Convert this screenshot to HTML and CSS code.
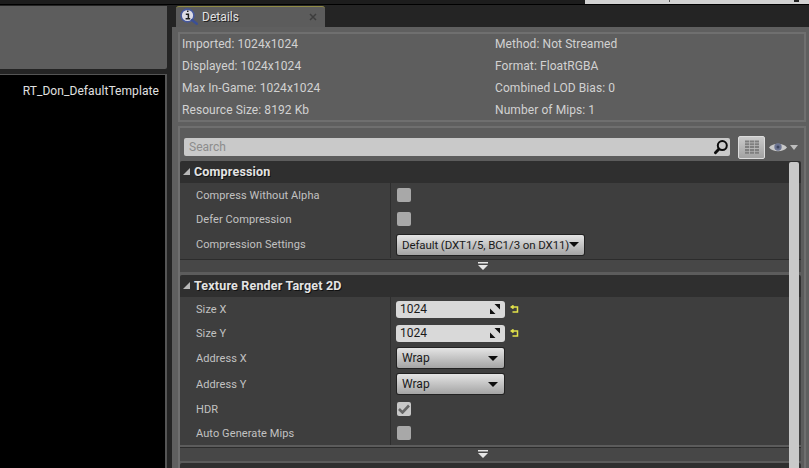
FILE: index.html
```html
<!DOCTYPE html>
<html lang="en">
<head>
<meta charset="utf-8">
<title>Details</title>
<link rel="stylesheet" href="styles.css">
</head>
<body>
<div class="topbar"><div class="topfield"></div></div>
<div class="main">
  <aside class="left">
    <div class="thumb"></div>
    <div class="assets"><div class="asset">RT_Don_DefaultTemplate</div></div>
  </aside>
  <section class="right">
    <div class="tabs">
      <div class="tab">
        <svg class="tabicon" width="18" height="18" viewBox="0 0 18 18"><circle cx="7.500" cy="7.500" r="6.400" fill="#dcdce6" stroke="#46589c" stroke-width="1.600"/><path d="M12 12l4.800 3.800" stroke="#3a4f96" stroke-width="2.400" stroke-linecap="round"/><path d="M5.800 6.200h2.600v4.200M5.600 10.800h4.600M7 3.200h1.500" stroke="#1c1c1c" stroke-width="1.500" fill="none"/></svg>
        <span class="tabtitle">Details</span>
        <svg class="tabclose" width="8" height="8" viewBox="0 0 8 8"><path d="M1 1l6 6M7 1l-6 6" stroke="#3d3d3d" stroke-width="1.500"/></svg>
      </div>
    </div>
    <div class="body">
      <div class="info">
        <div class="infocol">
          <div>Imported: 1024x1024</div>
          <div>Displayed: 1024x1024</div>
          <div>Max In-Game: 1024x1024</div>
          <div>Resource Size: 8192 Kb</div>
        </div>
        <div class="infocol">
          <div>Method: Not Streamed</div>
          <div>Format: FloatRGBA</div>
          <div>Combined LOD Bias: 0</div>
          <div>Number of Mips: 1</div>
        </div>
      </div>
      <div class="panel">
        <div class="searchrow">
          <div class="search">
            <span class="placeholder">Search</span>
            <svg class="lens" width="16" height="16" viewBox="0 0 16 16"><circle cx="9.300" cy="6.600" r="4.500" fill="none" stroke="#0c0c0c" stroke-width="2"/><path d="M6 10l-3.600 3.800" stroke="#0c0c0c" stroke-width="2.800" stroke-linecap="round"/></svg>
          </div>
          <div class="gridbtn">
            <svg width="14" height="14" viewBox="0 0 14 14"><path d="M0 1.500h14M0 4.300h14M0 7.100h14M0 9.900h14M0 12.700h14" stroke="#7f7f7f" stroke-width="2"/><path d="M4.500 0v14M9.500 0v14" stroke="#bdbdbd" stroke-width=".7"/></svg>
          </div>
          <svg class="eye" width="18" height="11" viewBox="0 0 18 11"><path d="M0 5.500C4 .5 14 .5 18 5.500 14 10.500 4 10.500 0 5.500z" fill="#c9c9c9"/><circle cx="9" cy="5" r="3.700" fill="#6b7390"/><circle cx="9" cy="5" r="1.500" fill="#3e4660"/></svg>
          <svg class="caret" width="8" height="5" viewBox="0 0 8 5"><path d="M0 0h8L4 5z" fill="#bdbdbd"/></svg>
        </div>
        <div class="listwrap">
          <div class="list">
            <div class="cat">
              <div class="cathead"><i class="tri"></i><span>Compression</span></div>
              <div class="row"><div class="name">Compress Without Alpha</div><div class="val"><span class="check"></span></div></div>
              <div class="row"><div class="name">Defer Compression</div><div class="val"><span class="check"></span></div></div>
              <div class="row tall last"><div class="name">Compression Settings</div><div class="val"><div class="combo wide"><span>Default (DXT1/5, BC1/3 on DX11)</span><i class="down"></i></div></div></div>
              <div class="more"><svg width="10" height="8" viewBox="0 0 10 8"><path d="M0 0h10v1.500H0zM0 3h10L5 8z" fill="#e6e6e6"/></svg></div>
            </div>
            <div class="cat">
              <div class="cathead"><i class="tri"></i><span>Texture Render Target 2D</span></div>
              <div class="row"><div class="name">Size X</div><div class="val"><div class="num"><span>1024</span><svg width="10" height="10" viewBox="0 0 10 10"><path d="M4.500 0H10v5.500zM0 4.500L5.500 10H0z" fill="#111"/></svg></div><svg class="reset" width="9" height="9" viewBox="0 0 9 9"><path d="M1.500 2h6v5H2.500M3.500 .4L1.200 2l2.300 1.700" fill="none" stroke="#e2e24a" stroke-width="1.500"/></svg></div></div>
              <div class="row"><div class="name">Size Y</div><div class="val"><div class="num"><span>1024</span><svg width="10" height="10" viewBox="0 0 10 10"><path d="M4.500 0H10v5.500zM0 4.500L5.500 10H0z" fill="#111"/></svg></div><svg class="reset" width="9" height="9" viewBox="0 0 9 9"><path d="M1.500 2h6v5H2.500M3.500 .4L1.200 2l2.300 1.700" fill="none" stroke="#e2e24a" stroke-width="1.500"/></svg></div></div>
              <div class="row tall"><div class="name">Address X</div><div class="val"><div class="combo narrow"><span>Wrap</span><i class="down"></i></div></div></div>
              <div class="row tall"><div class="name">Address Y</div><div class="val"><div class="combo narrow"><span>Wrap</span><i class="down"></i></div></div></div>
              <div class="row"><div class="name">HDR</div><div class="val"><span class="check on"><svg width="12" height="10" viewBox="0 0 12 10"><path d="M1 5l3.500 3.500L11 1.500" fill="none" stroke="#666" stroke-width="2.600"/></svg></span></div></div>
              <div class="row"><div class="name">Auto Generate Mips</div><div class="val"><span class="check"></span></div></div>
              <div class="more bottom"><svg width="10" height="8" viewBox="0 0 10 8"><path d="M0 0h10v1.500H0zM0 3h10L5 8z" fill="#e6e6e6"/></svg></div>
            </div>
            <div class="cat"><div class="cathead"></div></div>
          </div>
          <div class="scroll"></div>
        </div>
      </div>
    </div>
  </section>
</div>
</body>
</html>
```
FILE: styles.css
```css
* { box-sizing: border-box; }
html, body { margin: 0; padding: 0; }
body {
  width: 809px;
  height: 468px;
  overflow: hidden;
  background: #242424;
  font-family: Roboto, "Liberation Sans", sans-serif;
  font-size: 12px;
  display: flex;
  flex-direction: column;
}
.topbar {
  height: 5px;
  flex: none;
  background: #1d1d1d;
  border-bottom: 1px solid #000;
  display: flex;
  justify-content: flex-end;
}
.topfield { width: 224px; height: 4px; background: #d2d2d2; position: relative; }
.topfield::before { content: ""; position: absolute; left: 84px; top: 0; width: 1px; height: 2px; background: #555; }
.topfield::after { content: ""; position: absolute; left: 209px; top: 0; width: 5px; height: 2px; background: #222; }
.main { flex: 1; display: flex; min-height: 0; padding-top: 1px; }

.left { width: 167px; flex: none; display: flex; flex-direction: column; gap: 5px; }
.thumb { height: 63px; background: #5d5d5d; border-bottom-right-radius: 2px; }
.assets {
  flex: 1;
  background: #000;
  border-top: 1px solid #555;
  border-right: 2px solid #555;
  padding: 9px 6px 0 0;
}
.asset { color: #e0e0e0; text-align: right; line-height: 14px; font-size: 12px; letter-spacing: .08px; }

.right { flex: 1; margin-left: 5px; display: flex; flex-direction: column; min-width: 0; }
.tabs { height: 21px; flex: none; padding-left: 4px; }
.tab {
  width: 149px;
  height: 21px;
  background: #5c5c5c;
  border-top: 1px solid #8f8a45;
  border-radius: 3px 3px 0 0;
  display: flex;
  align-items: center;
  padding: 0 0 1px 4px;
}
.tabicon { flex: none; }
.tabtitle { color: #e2e2e2; margin-left: 4px; font-size: 12px; letter-spacing: .05px; text-shadow: 1px 1px 0 #222; }
.tabclose { margin-left: auto; margin-right: 8px; }

.body { flex: 1; background: #5f5f5f; display: flex; flex-direction: column; min-height: 0; padding: 5px 3px 0 6px; gap: 4px; }
.info {
  height: 90px;
  flex: none;
  border: 2px solid #6f6f6f;
  background: #5e5e5e;
  display: flex;
  align-items: center;
  padding: 0 2px;
  color: #d2d2d2;
  font-size: 12px;
  letter-spacing: .08px;
}
.infocol { line-height: 22px; flex: none; }
.infocol:first-child { width: 313px; }

.panel { flex: 1; border: 2px solid #6f6f6f; border-bottom: 0; min-height: 0; display: flex; flex-direction: column; background: #5c5c5c; }
.searchrow { height: 35px; flex: none; display: flex; align-items: center; padding: 3px 0 0 4px; }
.search {
  width: 546px;
  height: 18px;
  background: #c9c9c9;
  border-radius: 2px;
  display: flex;
  align-items: center;
  justify-content: space-between;
  padding: 0 1px 0 5px;
  color: #8c8c8c;
}
.lens { flex: none; }
.gridbtn {
  width: 27px;
  height: 23px;
  margin-left: 8px;
  border: 1px solid #dcdcdc;
  border-radius: 2px;
  background: linear-gradient(#cacaca, #a2a2a2);
  display: flex;
  align-items: center;
  justify-content: center;
}
.eye { margin-left: 4px; flex: none; }
.caret { margin-left: 3px; flex: none; }

.listwrap { flex: 1; display: flex; min-height: 0; position: relative; margin-top: -2px; }
.list { width: 621px; flex: none; }
.scroll {
  position: absolute;
  left: 609px;
  top: 1px;
  bottom: 0;
  width: 10px;
  background: #c9c9c9;
  border-radius: 2px 2px 0 0;
}
.cat { margin-bottom: 3px; }
.cat + .cat { margin-bottom: 2px; }
.cathead {
  height: 22px;
  background: #2f2f2f;
  border-radius: 2px 2px 0 0;
  color: #e4e4e4;
  font-weight: 700;
  font-size: 12.500px;
  letter-spacing: .18px;
  display: flex;
  align-items: center;
  padding: 0 0 1px 3px;
  text-shadow: 1px 1px 0 #111;
}
.tri {
  width: 0;
  height: 0;
  border-left: 7px solid transparent;
  border-bottom: 7px solid #b8b8b8;
  margin-right: 4px;
}
.row { height: 24px; background: #3e3e3e; display: flex; align-items: center; }
.row.tall { height: 26px; }
.row.last { height: 28px; padding-bottom: 1px; }
.name {
  width: 211px;
  height: 100%;
  padding-left: 16px;
  display: flex;
  align-items: center;
  color: #c2c2c2;
  font-size: 11px;
  letter-spacing: .09px;
  border-right: 1px solid #2e2e2e;
}
.val { flex: 1; padding-left: 6px; display: flex; align-items: center; }
.check {
  width: 14px;
  height: 14px;
  background: #a8a8a8;
  border-radius: 2px;
  display: flex;
  align-items: center;
  justify-content: center;
}
.check.on { background: #c8c8c8; }
.combo {
  height: 20px;
  background: linear-gradient(#e4e4e4, #a4a4a4);
  border-radius: 2px;
  color: #1a1a1a;
  display: flex;
  align-items: center;
  justify-content: space-between;
  padding: 0 6px 0 5px;
  box-shadow: 0 0 0 1px #222;
  white-space: nowrap;
}
.combo.wide { width: 187px; padding-right: 7px; font-size: 11.500px; letter-spacing: -.1px; }
.combo.narrow { width: 107px; }
.down { width: 0; height: 0; border-left: 5px solid transparent; border-right: 5px solid transparent; border-top: 5px solid #0d0d0d; }
.num {
  width: 109px;
  height: 17px;
  margin-left: -1px;
  background: #d9d9d9;
  border-radius: 3px;
  color: #1a1a1a;
  display: flex;
  align-items: center;
  justify-content: space-between;
  padding: 0 5px 0 4px;
}
.reset { margin-left: 5px; }
.more { height: 13px; background: #474747; border-top: 1px solid #2c2c2c; display: flex; align-items: center; justify-content: center; padding: 0 16px 1px 0; }
.more.bottom { height: 14px; margin-top: 2px; }
```
